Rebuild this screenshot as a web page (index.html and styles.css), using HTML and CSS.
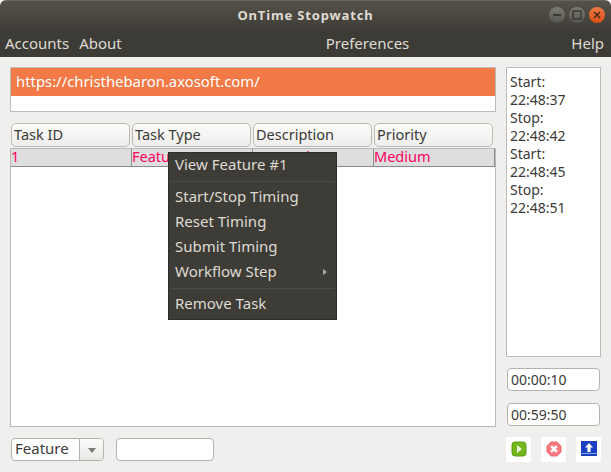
FILE: index.html
```html
<!DOCTYPE html>
<html lang="en">
<head>
    <meta charset="UTF-8">
    <meta name="viewport" content="width=device-width, initial-scale=1.0">
    <title>OnTime Stopwatch</title>
    <link rel="stylesheet" href="styles.css">
</head>
<body>
    <div class="window">
        <div class="titlebar">
            <span class="title">OnTime Stopwatch</span>
            <div class="controls">
                <span class="ctl"><svg width="10" height="10" viewBox="0 0 10 10"><path d="M1 5h8" stroke="#2f2e29" stroke-width="1.3"/></svg></span>
                <span class="ctl"><svg width="10" height="10" viewBox="0 0 10 10"><rect x="1" y="1" width="8" height="8" fill="none" stroke="#2f2e29" stroke-width="1.2"/></svg></span>
                <span class="ctl ctl-close"><svg width="10" height="10" viewBox="0 0 10 10"><path d="M2 2l6 6M8 2l-6 6" stroke="#3a2418" stroke-width="1.3"/></svg></span>
            </div>
        </div>
        <div class="menubar">
            <div class="menu-left"><span>Accounts</span><span>About</span></div>
            <span class="menu-mid">Preferences</span>
            <span class="menu-right">Help</span>
        </div>

        <div class="content">
            <div class="left">
                <div class="url-box">
                    <div class="url-item">https://christhebaron.axosoft.com/</div>
                </div>
                <div class="table">
                    <div class="head">
                        <div class="head-cell">Task ID</div>
                        <div class="head-cell">Task Type</div>
                        <div class="head-cell">Description</div>
                        <div class="head-cell">Priority</div>
                    </div>
                    <div class="table-body">
                        <div class="row">
                            <div class="cell">1</div>
                            <div class="cell">Feature</div>
                            <div class="cell">Test Task</div>
                            <div class="cell">Medium</div>
                        </div>
                    </div>
                </div>
            </div>
            <div class="right">
                <div class="log">
                    <div>Start:</div><div>22:48:37</div>
                    <div>Stop:</div><div>22:48:42</div>
                    <div>Start:</div><div>22:48:45</div>
                    <div>Stop:</div><div>22:48:51</div>
                </div>
                <div class="time-field">00:00:10</div>
                <div class="time-field">00:59:50</div>
            </div>
        </div>

        <div class="footer">
            <div class="combo">
                <span class="combo-text">Feature</span>
                <span class="combo-btn"><span class="combo-arrow"></span></span>
            </div>
            <div class="search"></div>
            <div class="actions">
                <span class="action"><svg width="16" height="16" viewBox="0 0 16 16"><rect x="1" y="1" width="14" height="14" rx="3" fill="#72b81c" stroke="#5c9c10"/><path d="M6 4l5 4-5 4z" fill="#eef7dc"/></svg></span>
                <span class="action"><svg width="16" height="16" viewBox="0 0 16 16"><path d="M5 1h6l4 4v6l-4 4H5l-4-4V5z" fill="#f77a80" stroke="#ee6a70"/><path d="M5.2 5.2l5.6 5.6M10.800 5.200l-5.600 5.600" stroke="#fff" stroke-width="2.400"/></svg></span>
                <span class="action"><svg width="18" height="18" viewBox="0 0 18 18"><rect x="1" y="1" width="16" height="12" fill="#1a3fc0"/><rect x="1" y="13" width="16" height="1" fill="#8ea2e6"/><rect x="1" y="14" width="16" height="2" fill="#1a3fc0"/><path d="M9 3l4 4.500h-2.400V12H7.400V7.500H5z" fill="#fff"/></svg></span>
            </div>
        </div>

        <div class="context-menu">
            <div class="menu-item">View Feature #1</div>
            <div class="sep"></div>
            <div class="menu-item">Start/Stop Timing</div>
            <div class="menu-item">Reset Timing</div>
            <div class="menu-item">Submit Timing</div>
            <div class="menu-item">Workflow Step<span class="submenu-arrow"></span></div>
            <div class="sep"></div>
            <div class="menu-item">Remove Task</div>
        </div>
    </div>
</body>
</html>
```

FILE: styles.css
```css
html, body {
    margin: 0;
    padding: 0;
    background: #fff;
}
.window {
    position: relative;
    width: 611px;
    height: 472px;
    background: #f0efed;
    font-family: "Noto Sans", sans-serif;
    font-size: 15px;
    color: #3c3b37;
    overflow: hidden;
    border-radius: 6px 6px 0 0;
}
.titlebar {
    height: 29px;
    display: flex;
    align-items: center;
    justify-content: center;
    position: relative;
    background: linear-gradient(#55524a, #403e38);
    border-top: 1px solid #67645a;
    box-sizing: border-box;
}
.title {
    color: #dfdbd2;
    font-weight: bold;
    font-size: 13px;
    letter-spacing: 0.85px;
}
.controls {
    position: absolute;
    right: 6px;
    top: 6px;
    display: flex;
    gap: 4px;
}
.ctl {
    width: 16px;
    height: 16px;
    border-radius: 50%;
    background: linear-gradient(#7b7a73, #55544e);
    display: flex;
    align-items: center;
    justify-content: center;
}
.ctl-close {
    background: linear-gradient(#f07a45, #d94f17);
}
.menubar {
    height: 28px;
    background: #3c3b36;
    color: #dfdbd2;
    display: flex;
    align-items: center;
    padding: 0 7px 0 5px;
    position: relative;
}
.menu-left {
    display: flex;
    gap: 10px;
}
.menu-mid {
    margin-left: 204px;
}
.menu-right {
    margin-left: auto;
}
.content {
    display: flex;
    padding: 10px 10px 0 10px;
    gap: 10px;
    height: 370px;
    box-sizing: border-box;
}
.left {
    width: 486px;
    display: flex;
    flex-direction: column;
    gap: 10px;
}
.url-box {
    height: 45px;
    flex-shrink: 0;
    box-sizing: border-box;
    background: #fff;
    border: 1px solid #bdbcb8;
}
.url-item {
    height: 28px;
    line-height: 27px;
    background: #f37946;
    color: #fff;
    padding-left: 5px;
    font-size: 14.85px;
}
.table {
    flex: 1;
    display: flex;
    flex-direction: column;
    gap: 1px;
    min-height: 0;
}
.head {
    display: flex;
    gap: 2px;
    height: 24px;
    margin-top: 1px;
    padding-left: 1px;
}
.head-cell {
    width: 119px;
    box-sizing: border-box;
    border: 1px solid #bcbab5;
    border-radius: 5px;
    background: linear-gradient(#fbfbfa, #eeedeb);
    line-height: 21px;
    padding-left: 2px;
    font-size: 14.5px;
}
.table-body {
    flex: 1;
    background: #fff;
    border: 1px solid #b9b8b4;
}
.row {
    display: flex;
    height: 18px;
    box-sizing: border-box;
    background: #dedede;
    border-bottom: 1px solid #8b8a87;
    line-height: 15px;
    color: #ff0060;
    font-size: 14.5px;
}
.cell {
    width: 121px;
    box-sizing: border-box;
    border-right: 1px solid #8f8e8b;
}
.right {
    width: 95px;
    display: flex;
    flex-direction: column;
    align-items: center;
}
.log {
    width: 95px;
    height: 290px;
    flex-shrink: 0;
    box-sizing: border-box;
    border: 1px solid #bdbcb8;
    background: #fff;
    padding: 5px 3px;
    line-height: 18px;
    font-size: 14px;
    margin-bottom: 11px;
}
.time-field {
    width: 93px;
    height: 23px;
    flex-shrink: 0;
    box-sizing: border-box;
    border: 1px solid #b5b3ae;
    border-radius: 4px;
    background: #fff;
    line-height: 21px;
    padding-left: 3px;
    margin-bottom: 12px;
    font-size: 14px;
}
.footer {
    display: flex;
    align-items: center;
    padding: 0 10px 0 11px;
    height: 26px;
    margin-top: 9px;
}
.combo {
    width: 93px;
    height: 23px;
    box-sizing: border-box;
    display: flex;
    border: 1px solid #b5b3ae;
    border-radius: 4px;
    background: #fff;
    line-height: 19px;
    overflow: hidden;
}
.combo-text {
    flex: 1;
    padding-left: 3px;
}
.combo-btn {
    width: 23px;
    border-left: 1px solid #b5b3ae;
    background: linear-gradient(#fbfbfa, #e9e8e6);
    display: flex;
    align-items: center;
    justify-content: center;
}
.combo-arrow {
    border-left: 4px solid transparent;
    border-right: 4px solid transparent;
    border-top: 5px solid #7a7976;
    margin-top: 2px;
}
.search {
    width: 98px;
    height: 23px;
    box-sizing: border-box;
    margin-left: 12px;
    border: 1px solid #b5b3ae;
    border-radius: 4px;
    background: #fff;
}
.actions {
    margin-left: auto;
    display: flex;
    gap: 10px;
}
.action {
    width: 25px;
    height: 25px;
    background: #fff;
    display: flex;
    align-items: center;
    justify-content: center;
}
.context-menu {
    position: absolute;
    left: 168px;
    top: 152px;
    width: 169px;
    height: 168px;
    box-sizing: border-box;
    background: #3d3c37;
    border: 1px solid #2e2d29;
    color: #dfdbd2;
}
.menu-item {
    height: 25px;
    line-height: 23px;
    padding-left: 6px;
    position: relative;
}
.sep {
    height: 1px;
    margin: 3px 2px 3px 2px;
    background: #4c4b45;
}
.submenu-arrow {
    position: absolute;
    right: 9px;
    top: 9px;
    border-top: 3px solid transparent;
    border-bottom: 3px solid transparent;
    border-left: 4px solid #a9a69e;
}
```
